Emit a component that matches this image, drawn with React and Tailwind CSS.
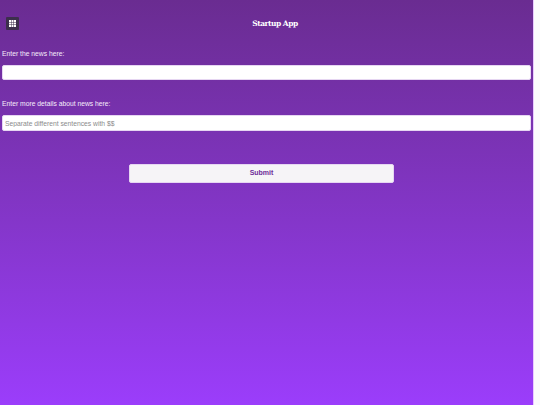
const sans = { fontFamily: '"Liberation Sans", Arial, sans-serif' }

function GridIcon() {
  const cells = [0, 1, 2]
  return (
    <svg width="7" height="7" viewBox="0 0 7 7" fill="#ffffff">
      {cells.map(y => cells.map(x => (
        <rect key={`${x}-${y}`} x={x * 2.5} y={y * 2.5} width="2" height="2" />
      )))}
    </svg>
  )
}

export default function App() {
  return (
    <div className="flex h-[405px] w-[540px] overflow-hidden bg-[#fbfafc]">
      <div className="flex h-full w-[534px] flex-col border-r border-[#e9c9ff] bg-gradient-to-b from-[#6a2c91] to-[#9b3dfb]">
        <header className="flex h-[30px] items-end pl-[6px]">
          <button className="flex h-[13px] w-[13px] items-center justify-center rounded-[1px] bg-[#3c2f4c]">
            <GridIcon />
          </button>
          <h1 className="flex-1 pr-[2px] text-center text-[7.5px] font-bold leading-[13px] tracking-[-0.5px] text-white" style={{ fontFamily: '"DejaVu Serif", serif' }}>Startup App</h1>
        </header>

        <form className="flex flex-col px-[2px]" style={sans}>
          <label className="mt-[19px] text-[6.75px] leading-[9px] text-[#f6ecfb]">Enter the news here:</label>
          <input className="mt-[7px] h-[15px] w-[529px] rounded-[2px] border border-[#e6d6f2] bg-white px-[2px] text-[6.75px] outline-none" />

          <label className="mt-[19px] text-[6.75px] leading-[9px] text-[#f6ecfb]">Enter more details about news here:</label>
          <input
            className="mt-[7px] h-[16px] w-[529px] rounded-[2px] border border-[#e6d6f2] bg-white px-[2px] text-[6.75px] outline-none placeholder:text-[#8b8b8b]"
            placeholder="Separate different sentences with $$"
          />

          <div className="mt-[33px] flex pl-[127px]">
            <button type="button" className="h-[19px] w-[265px] rounded-[2px] border border-[#e6d6f2] bg-[#f6f4f7] pb-[1px] text-[7px] font-bold text-[#6f2d99]">Submit</button>
          </div>
        </form>
      </div>
    </div>
  )
}
